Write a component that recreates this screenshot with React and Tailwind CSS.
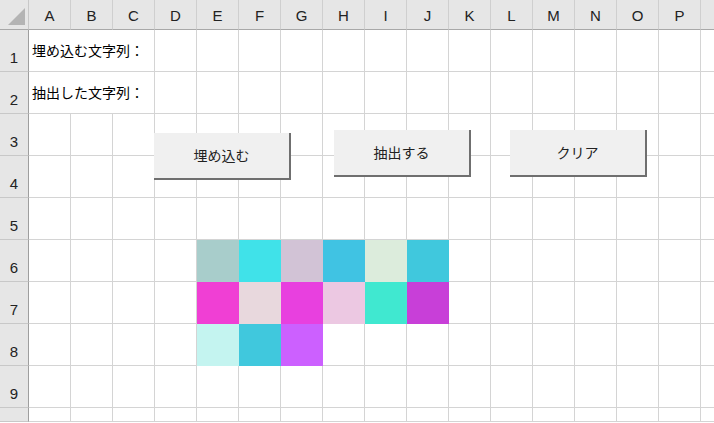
const COLS = "ABCDEFGHIJKLMNOP".split("");

// cell fills in the picture area (E6:J8)
const FILLS = {
  6: {
    E: "bg-[#a8cdcb] border-[#a8cdcb]",
    F: "bg-[#40e2e9] border-[#40e2e9]",
    G: "bg-[#d2c3d6] border-[#d2c3d6]",
    H: "bg-[#40c3e3] border-[#40c3e3]",
    I: "bg-[#dcecdc] border-[#dcecdc]",
    J: "bg-[#40c8dd] border-[#40c8dd]",
  },
  7: {
    E: "bg-[#f03fd4] border-[#f03fd4]",
    F: "bg-[#e8d8dd] border-[#e8d8dd]",
    G: "bg-[#e840df] border-[#e840df]",
    H: "bg-[#ecc8e2] border-[#ecc8e2]",
    I: "bg-[#40e8d0] border-[#40e8d0]",
    J: "bg-[#c83fd8] border-[#c83fd8]",
  },
  8: {
    E: "bg-[#c4f4f0] border-[#c4f4f0]",
    F: "bg-[#40c8dd] border-[#40c8dd]",
    G: "bg-[#cc60ff] border-[#cc60ff]",
  },
};

const LABELS = { 1: "埋め込む文字列：", 2: "抽出した文字列：" };

const jp = { fontFamily: '"Noto Sans CJK JP", sans-serif' };
const latin = { fontFamily: '"Liberation Sans", Arial, sans-serif' };

function RowHead({ n }) {
  return (
    <div
      className="w-[29px] h-full shrink-0 bg-[#e6e6e6] border-r border-b border-r-[#9e9e9e] border-b-[#c8c8c8] flex items-end justify-center pb-[6px] text-[15px] leading-none text-[#222]"
      style={latin}
    >
      {n}
    </div>
  );
}

function Cell({ fill }) {
  return <div className={"w-[42px] h-full shrink-0 border-r border-b " + (fill || "border-[#d4d4d4]")} />;
}

function Row({ n, h = "h-[42px]" }) {
  const label = LABELS[n];
  const cols = label ? COLS.slice(3) : COLS;
  const fills = FILLS[n] || {};
  return (
    <div className={"flex " + h}>
      <RowHead n={n} />
      {label && (
        <div
          className="w-[126px] h-full shrink-0 border-r border-b border-[#d4d4d4] flex items-center pl-[3px] text-[14px] text-black whitespace-nowrap"
          style={jp}
        >
          {label}
        </div>
      )}
      {cols.map((c) => (
        <Cell key={c} fill={fills[c]} />
      ))}
      <div className="flex-1 h-full border-b border-[#d4d4d4]" />
    </div>
  );
}

function SheetButton({ className, children }) {
  return (
    <div
      className={
        "absolute w-[137px] h-[47px] bg-[#f0f0f0] border-r-2 border-b-2 border-[#6f6f6f] flex items-center justify-center text-[14px] text-[#222] " +
        className
      }
      style={jp}
    >
      {children}
    </div>
  );
}

export default function App() {
  return (
    <div className="relative w-[714px] h-[423px] overflow-hidden bg-white select-none">
      {/* column headers */}
      <div className="flex h-[30px]">
        <div className="w-[29px] h-full shrink-0 bg-[#e6e6e6] border-r border-b border-r-[#c8c8c8] border-b-[#a8a8a8] relative">
          <svg className="absolute left-[8px] top-[8px]" width="17" height="17" viewBox="0 0 17 17">
            <polygon points="17,0 17,17 0,17" fill="#b4b4b4" />
          </svg>
        </div>
        {COLS.map((c) => (
          <div
            key={c}
            className="w-[42px] h-full shrink-0 bg-[#e6e6e6] border-r border-b border-r-[#cfcfcf] border-b-[#a8a8a8] flex items-end justify-center pb-[6px] text-[15px] leading-none text-[#222]"
            style={latin}
          >
            {c}
          </div>
        ))}
        <div className="flex-1 h-full bg-[#e6e6e6] border-b border-[#a8a8a8]" />
      </div>

      {[1, 2, 3, 4, 5, 6, 7, 8, 9].map((n) => (
        <Row key={n} n={n} />
      ))}
      <Row n="" h="h-[14px]" />

      <SheetButton className="left-[154px] top-[133px]">埋め込む</SheetButton>
      <SheetButton className="left-[334px] top-[130px]">抽出する</SheetButton>
      <SheetButton className="left-[510px] top-[130px]">クリア</SheetButton>
    </div>
  );
}
